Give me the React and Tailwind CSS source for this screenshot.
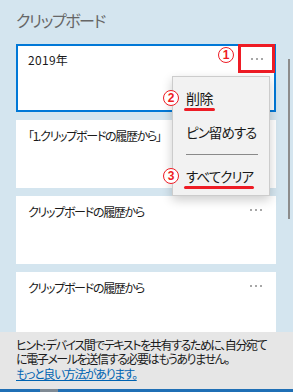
import React from "react";

const jp = "[font-family:'Noto_Sans_CJK_JP','Noto_Sans',sans-serif] [font-feature-settings:'palt']";

function Dots({ className = "" }) {
  return (
    <div className={"flex gap-[3px] items-center " + className}>
      <span className="w-[2px] h-[2px] bg-[#8a8a8a] rounded-full" />
      <span className="w-[2px] h-[2px] bg-[#8a8a8a] rounded-full" />
      <span className="w-[2px] h-[2px] bg-[#8a8a8a] rounded-full" />
    </div>
  );
}

function Circled({ n, className = "" }) {
  return (
    <div
      className={
        "absolute w-[16px] h-[16px] rounded-full border-[1.5px] border-[#ee1c25] bg-white flex items-center justify-center text-[12px] font-bold text-[#ee1c25] leading-none [font-family:'Liberation_Sans',sans-serif] " +
        className
      }
    >
      {n}
    </div>
  );
}

function Card({ children, active, dots = true }) {
  return (
    <div
      className={
        "relative w-[260px] h-[68px] shrink-0 bg-white " +
        (active ? "border-2 border-[#0078d7] pl-[10px] pt-[5px]" : "pl-[12px] pt-[7px]")
      }
    >
      <div className="text-[12px] leading-[18px] text-[#1a1a1a] tracking-[-1.3px] whitespace-nowrap">{children}</div>
      {dots && !active && <Dots className="absolute right-[14px] top-[13px]" />}
    </div>
  );
}

export default function App() {
  return (
    <div className={"w-[293px] h-[392px] flex flex-col bg-[#d4e5ef] overflow-hidden " + jp}>
      <div className="flex-1 relative overflow-hidden">
        <div className="pl-[16px] pt-[9px] text-[16px] leading-[22px] text-[#666666] tracking-[-1.4px] whitespace-nowrap">
          クリップボード
        </div>
        <div className="flex flex-col gap-[8px] pl-[16px] mt-[13px]">
          <Card active>
            <span className="tracking-[0.3px]">2019</span>年
          </Card>
          <Card dots={false}>「1.クリップボードの履歴から」</Card>
          <Card>クリップボードの履歴から</Card>
          <Card>クリップボードの履歴から</Card>
        </div>

        {/* scrollbar */}
        <div className="absolute left-[288px] top-[59px] w-[2px] h-[160px] bg-[#8c8c8c]" />

        {/* more button highlight */}
        <div className="absolute left-[238px] top-[44px] w-[37px] h-[29px] border-[3px] border-[#ee1c25] bg-white flex items-center justify-center">
          <Dots />
        </div>
        <Circled n="1" className="left-[218px] top-[47px]" />

        {/* context menu */}
        <div className="absolute left-[172px] top-[76px] w-[98px] h-[120px] bg-[#f2f2f2] border border-[#cccccc] shadow-[0_4px_10px_rgba(0,0,0,0.2)] flex flex-col pl-[13px] whitespace-nowrap">
          <div className="relative mt-[12px] text-[14px] leading-[18px] text-[#1a1a1a] tracking-[-0.5px]">
            削除
            <div className="absolute left-[-2px] top-[19px] w-[31px] h-[3px] rounded-full bg-[#ee1c25]" />
          </div>
          <div className="mt-[16px] text-[13.5px] leading-[18px] text-[#1a1a1a] tracking-[-0.9px]">ピン留めする</div>
          <div className="mt-[13px] h-px bg-[#8a8a8a] w-[72px]" />
          <div className="relative mt-[12px] text-[13.5px] leading-[18px] text-[#1a1a1a] tracking-[-0.9px]">
            すべてクリア
            <div className="absolute left-[-2px] top-[19px] w-[70px] h-[3px] rounded-full bg-[#ee1c25]" />
          </div>
        </div>
        <Circled n="2" className="left-[163px] top-[90px]" />
        <Circled n="3" className="left-[163px] top-[168px]" />
      </div>

      <div className="h-[57px] shrink-0 bg-[#e6e6e6] pl-[16px] pt-[6px] text-[12px] leading-[14px] text-[#1a1a1a] tracking-[-1.4px] whitespace-nowrap">
        <div>ヒント: デバイス間でテキストを共有するために、自分宛て</div>
        <div>に電子メールを送信する必要はもうありません。</div>
        <div className="mt-[1px]">
          <span className="text-[#0063b1] underline">もっと良い方法があります。</span>
        </div>
      </div>
      <div className="h-[3px] shrink-0 bg-[#1f6fb5] relative">
        <div className="absolute left-[40px] top-0 w-[18px] h-[3px] bg-[#7f8a94]" />
      </div>
    </div>
  );
}
